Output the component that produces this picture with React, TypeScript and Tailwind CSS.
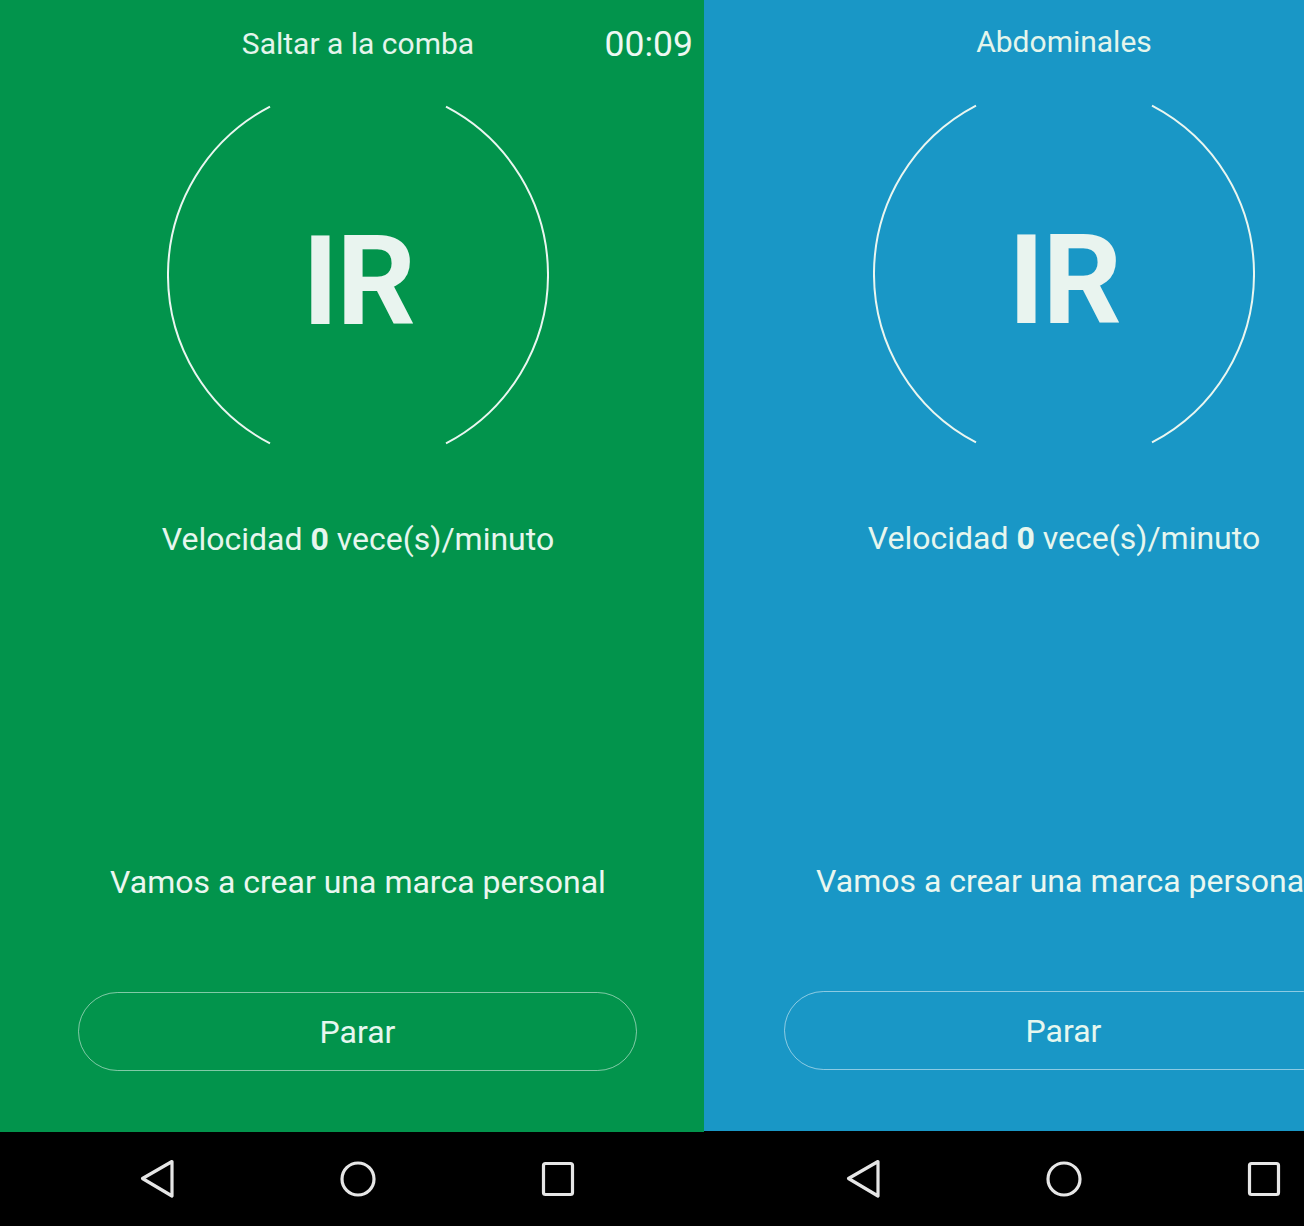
import React from "react";

const font = { fontFamily: "Roboto, 'Noto Sans', Arial, sans-serif" };

function NavBar({ tall }: { tall: boolean }) {
  return (
    <div
      className={`bg-black flex items-center justify-center gap-[160px] ${tall ? "h-[95px]" : "h-[94px]"}`}
    >
      <div className="w-[40px] h-[40px] flex items-center justify-center">
        <svg width="40" height="40" viewBox="0 0 40 40">
          <path d="M34 2.5 L4.5 19.5 L34 37 Z" fill="none" stroke="#e6e6e6" strokeWidth="3.2" strokeLinejoin="round" />
        </svg>
      </div>
      <div className="w-[40px] h-[40px] flex items-center justify-center">
        <svg width="40" height="40" viewBox="0 0 40 40">
          <circle cx="20" cy="20" r="16" fill="none" stroke="#e6e6e6" strokeWidth="3.2" />
        </svg>
      </div>
      <div className="w-[40px] h-[40px] flex items-center justify-center">
        <svg width="40" height="40" viewBox="0 0 40 40">
          <rect x="5.5" y="4.5" width="29" height="31" rx="2" fill="none" stroke="#e6e6e6" strokeWidth="3.2" />
        </svg>
      </div>
    </div>
  );
}

function Phone({
  width,
  title,
  timer,
  bg,
  up,
}: {
  width: number;
  title: string;
  timer?: string;
  bg: string;
  up: boolean;
}) {
  return (
    <div className="flex flex-col shrink-0" style={{ width }}>
      <div className={`flex flex-col items-center ${bg} ${up ? "h-[1131px]" : "h-[1132px]"}`}>
        <div className={`w-full h-[84px] grid grid-cols-[1fr_auto_1fr] items-center ${up ? "pt-0" : "pt-[4px]"}`}>
          <div />
          <div className="text-[30px] leading-[36px] text-[#e4f5ec]">{title}</div>
          <div className="flex justify-end pr-[23px]">
            {timer && <span className="text-[35.5px] leading-[40px] text-[#eef8f2]">{timer}</span>}
          </div>
        </div>
        <div className={`relative w-[382px] h-[382px] flex items-center justify-center ${up ? "-mt-px" : ""}`}>
          <svg className="absolute inset-0" width="382" height="382" viewBox="0 0 382 382">
            <path d="M103 22.6 A190 190 0 0 0 103 359.4" fill="none" stroke="#eaf6f0" strokeWidth="2" />
            <path d="M279 22.6 A190 190 0 0 1 279 359.4" fill="none" stroke="#eaf6f0" strokeWidth="2" />
          </svg>
          <span className="relative text-[124px] leading-none font-bold text-[#e9f4ef] tracking-[-2px] mt-[14px]">IR</span>
        </div>
        <div className="mt-[53px] h-[40px] flex items-center text-[32px] text-[#e6f6ee] whitespace-nowrap">
          <span>
            Velocidad <b className="font-bold">0</b> vece(s)/minuto
          </span>
        </div>
        <div className="mt-[303px] h-[40px] flex items-center text-[32px] text-[#eaf7f0] whitespace-nowrap">
          Vamos a crear una marca personal
        </div>
        <div className="mt-[90px] w-[559px] h-[79px] rounded-full border border-[#ffffff80] flex items-center justify-center text-[32px] text-[#e6f7ef] -ml-[1px]">
          Parar
        </div>
      </div>
      <NavBar tall={up} />
    </div>
  );
}

export default function App() {
  return (
    <div className="w-[1304px] h-[1226px] flex overflow-hidden bg-black" style={font}>
      <div className="w-[704px] h-full overflow-hidden shrink-0">
        <Phone width={716} title="Saltar a la comba" timer="00:09" bg="bg-[#02944c]" up={false} />
      </div>
      <div className="flex-1 h-full overflow-hidden">
        <Phone width={720} title="Abdominales" bg="bg-[#1997c6]" up={true} />
      </div>
    </div>
  );
}
